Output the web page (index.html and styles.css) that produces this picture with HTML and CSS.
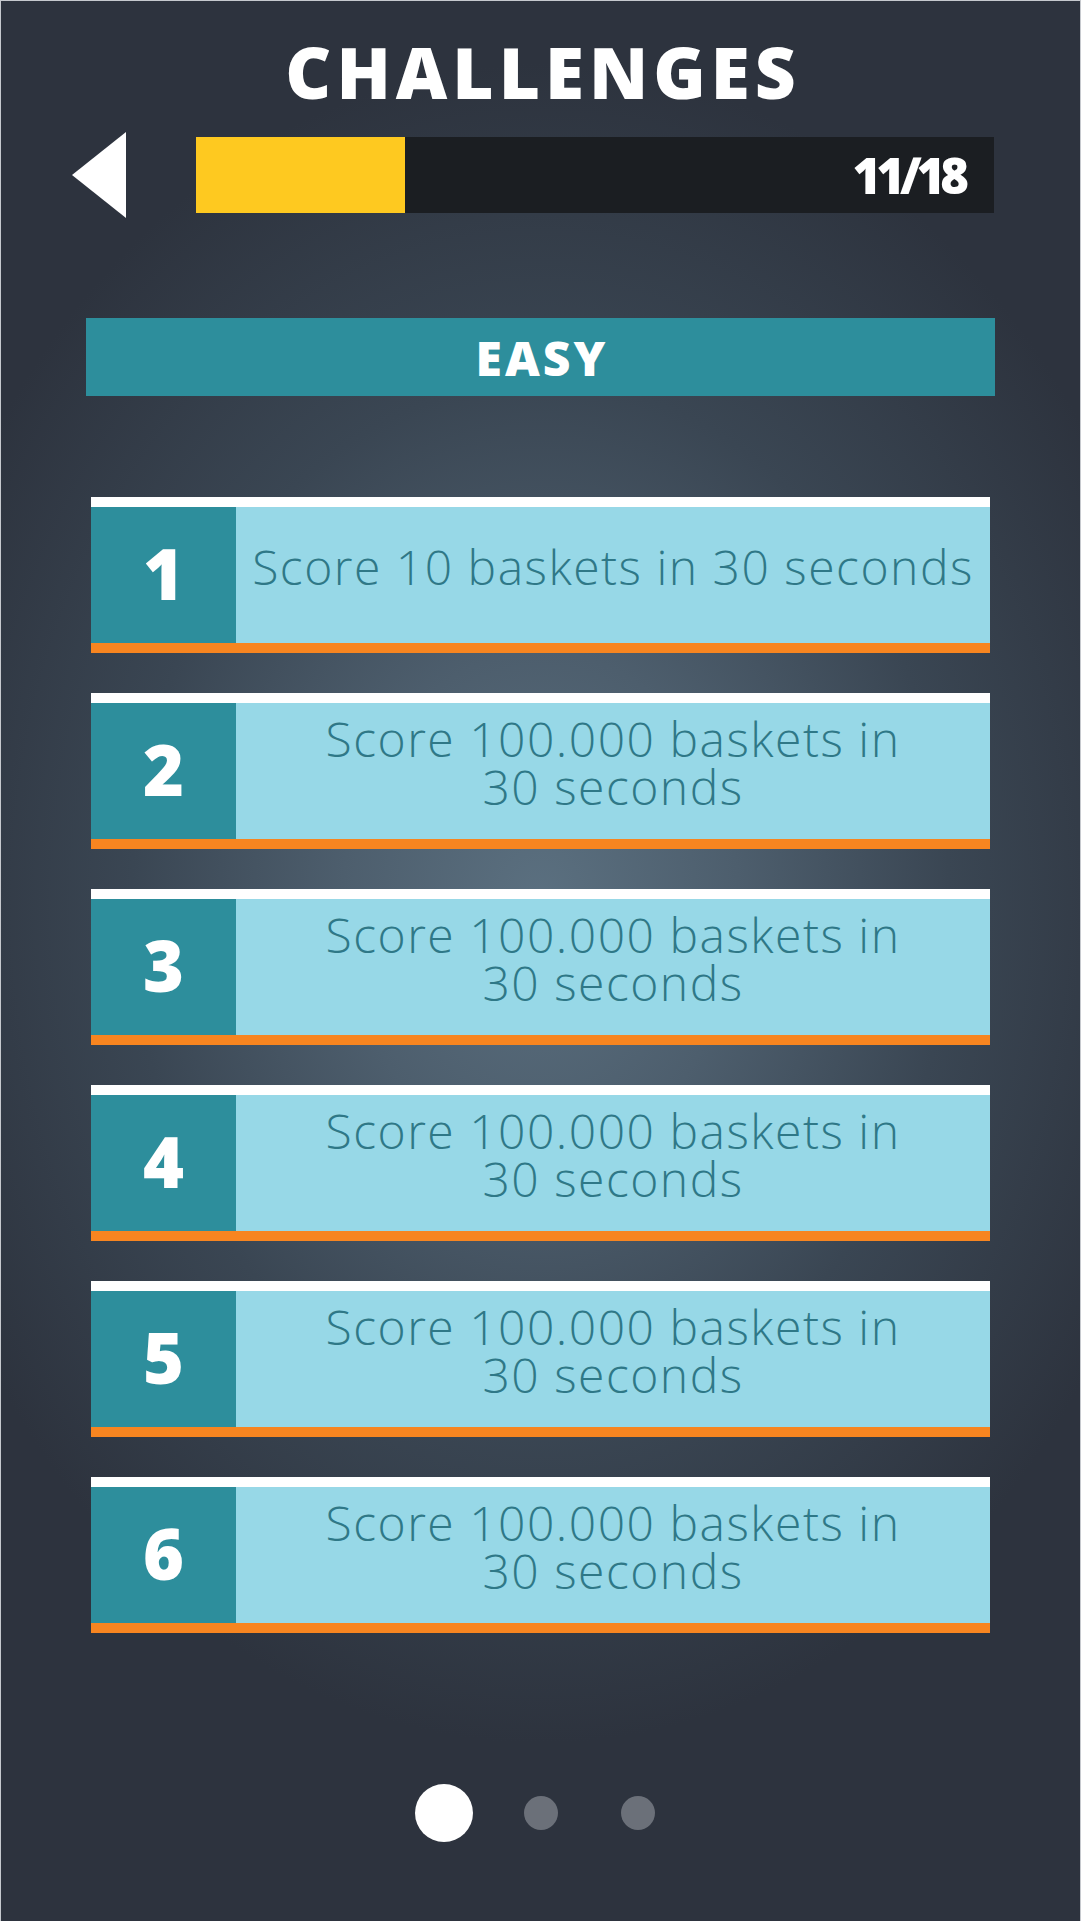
FILE: index.html
```html
<!DOCTYPE html>
<html lang="en">
<head>
<meta charset="utf-8">
<title>Challenges</title>
<link rel="stylesheet" href="styles.css">
</head>
<body>
<div class="screen">
  <h1 class="title">CHALLENGES</h1>
  <div class="nav">
    <button class="back" aria-label="Back">
      <svg width="54" height="86" viewBox="0 0 54 86"><polygon points="54,0 54,86 0,43" fill="#fff"/></svg>
    </button>
    <div class="progress">
      <div class="progress-fill" style="width:26.2%"></div>
      <span class="progress-label">11/18</span>
    </div>
  </div>
  <div class="level">EASY</div>
  <ul class="cards">
    <li class="card"><div class="num">1</div><div class="desc">Score 10 baskets in 30 seconds</div></li>
    <li class="card"><div class="num">2</div><div class="desc">Score 100.000 baskets in<br>30 seconds</div></li>
    <li class="card"><div class="num">3</div><div class="desc">Score 100.000 baskets in<br>30 seconds</div></li>
    <li class="card"><div class="num">4</div><div class="desc">Score 100.000 baskets in<br>30 seconds</div></li>
    <li class="card"><div class="num">5</div><div class="desc">Score 100.000 baskets in<br>30 seconds</div></li>
    <li class="card"><div class="num">6</div><div class="desc">Score 100.000 baskets in<br>30 seconds</div></li>
  </ul>
  <div class="dots">
    <span class="dot active"></span>
    <span class="dot"></span>
    <span class="dot"></span>
  </div>
</div>
</body>
</html>
```
FILE: styles.css
```css
html, body {
  margin: 0;
  padding: 0;
  background: #2d333e;
}
.screen {
  width: 1081px;
  height: 1921px;
  box-sizing: border-box;
  border: 1px solid #c6c9ce;
  border-bottom: none;
  background: radial-gradient(ellipse 660px 840px at 50% 47%, #5b7080 0%, #4d5e6d 30%, #3a4653 62%, #2d333e 100%);
  display: flex;
  flex-direction: column;
  font-family: "Open Sans", "Liberation Sans", sans-serif;
  overflow: hidden;
}
.title {
  margin: 0;
  padding-top: 31px;
  padding-left: 5px;
  height: 80px;
  line-height: 80px;
  font-size: 71px;
  font-weight: 800;
  color: #fff;
  text-align: center;
  letter-spacing: 5px;
}
.nav {
  margin-top: 20px;
  padding-left: 71px;
  display: flex;
  align-items: center;
  gap: 70px;
  height: 86px;
}
.back {
  border: 0;
  padding: 0;
  background: none;
  width: 54px;
  height: 86px;
  display: block;
}
.back svg { display: block; }
.progress {
  position: relative;
  width: 798px;
  height: 76px;
  background: #1b1e22;
  display: flex;
  align-items: center;
  justify-content: flex-end;
}
.progress-fill {
  position: absolute;
  left: 0;
  top: 0;
  bottom: 0;
  background: #fec920;
}
.progress-label {
  position: relative;
  padding-right: 30px;
  font-size: 49px;
  font-weight: 800;
  color: #fff;
  letter-spacing: -5px;
}
.level {
  margin: 100px 0 0 85px;
  padding-left: 3px;
  box-sizing: border-box;
  width: 909px;
  height: 78px;
  background: #2d8e9c;
  color: #fff;
  font-size: 48px;
  font-weight: 800;
  letter-spacing: 3px;
  display: flex;
  align-items: center;
  justify-content: center;
}
.cards {
  list-style: none;
  margin: 101px 0 0 90px;
  padding: 0;
  width: 899px;
  display: flex;
  flex-direction: column;
  gap: 40px;
}
.card {
  display: flex;
  height: 136px;
  border-top: 10px solid #fff;
  border-bottom: 10px solid #f78520;
  background: #97d8e7;
}
.num {
  width: 145px;
  flex: none;
  background: #2d8e9c;
  color: #fff;
  font-size: 70px;
  font-weight: 800;
  display: flex;
  align-items: center;
  justify-content: center;
  padding-bottom: 4px;
  box-sizing: border-box;
}
.desc {
  flex: 1;
  display: flex;
  align-items: center;
  justify-content: center;
  text-align: center;
  color: #2f7887;
  font-size: 48px;
  font-weight: 300;
  line-height: 48px;
  letter-spacing: 1.5px;
  padding-bottom: 16px;
  box-sizing: border-box;
}
.dots {
  margin-top: 151px;
  display: grid;
  grid-template-columns: repeat(3, 97px);
  justify-content: center;
  align-items: center;
  height: 58px;
}
.dot {
  justify-self: center;
  width: 34px;
  height: 34px;
  border-radius: 50%;
  background: #6b7079;
}
.dot.active {
  width: 58px;
  height: 58px;
  background: #fff;
}
```
